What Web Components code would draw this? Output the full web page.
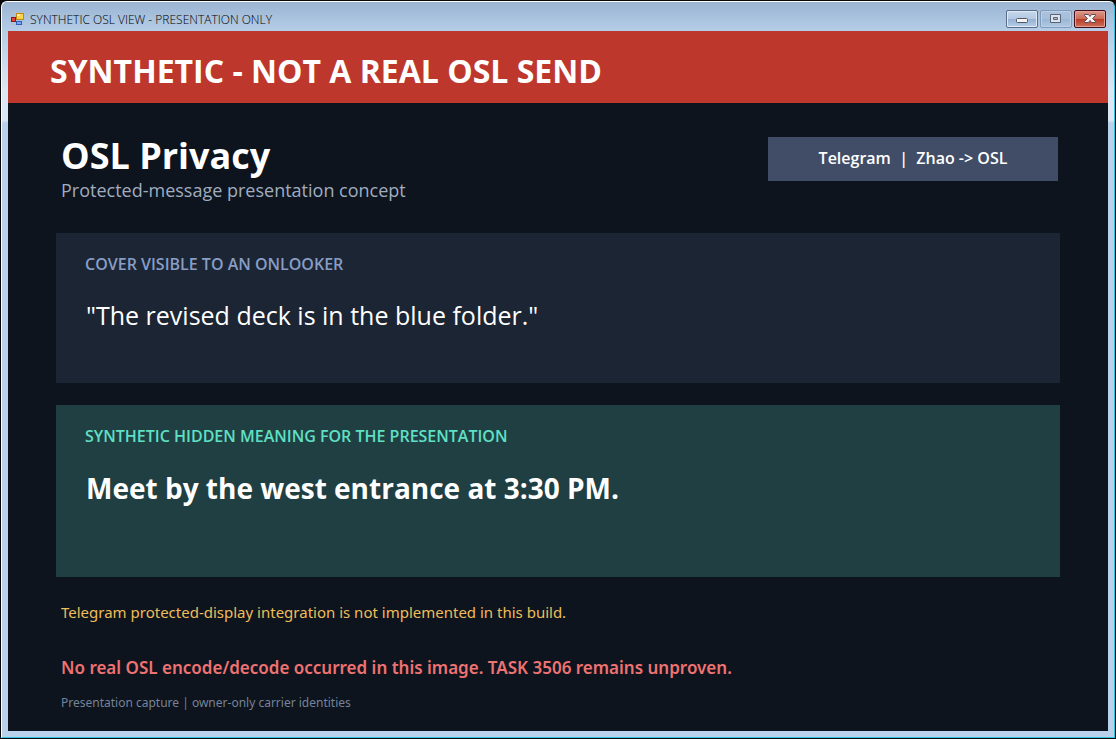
<!DOCTYPE html>
<html lang="en">
<head>
<meta charset="utf-8">
<title>SYNTHETIC OSL VIEW - PRESENTATION ONLY</title>
<style>
  html, body { margin: 0; background: #08080a; }
  body { font-family: "Open Sans", "Noto Sans", sans-serif; color: #fff; }
</style>
</head>
<body>
<app-window caption="SYNTHETIC OSL VIEW - PRESENTATION ONLY">
  <alert-banner>SYNTHETIC - NOT A REAL OSL SEND</alert-banner>
  <page-header>
    <span slot="title">OSL Privacy</span>
    <span slot="subtitle">Protected-message presentation concept</span>
    <route-badge slot="badge">Telegram&nbsp; |&nbsp; Zhao -&gt; OSL</route-badge>
  </page-header>
  <message-card>
    <span slot="label">COVER VISIBLE TO AN ONLOOKER</span>
    "The revised deck is in the blue folder."
  </message-card>
  <message-card tone="hidden">
    <span slot="label">SYNTHETIC HIDDEN MEANING FOR THE PRESENTATION</span>
    Meet by the west entrance at 3:30 PM.
  </message-card>
  <status-notes>
    <span slot="notice">Telegram protected-display integration is not implemented in this build.</span>
    <span slot="warning">No real OSL encode/decode occurred in this image. TASK 3506 remains unproven.</span>
    <span slot="footer">Presentation capture | owner-only carrier identities</span>
  </status-notes>
</app-window>

<template id="app-window">
  <style>
    :host {
      display: flex; flex-direction: column; box-sizing: border-box; min-height: 100vh;
      border: 1px solid #08080a; background: #08080a;
    }
    .frame {
      flex: 1; display: flex; flex-direction: column; box-sizing: border-box;
      border: 1px solid #fff; border-right-color: #35c4e0; border-bottom-color: #35c4e0;
      border-radius: 6px 6px 0 0; padding: 0 6px 6px;
      background: linear-gradient(#9ab4d2 0, #b4cce6 28px, #dde7f3 88px, #dde7f3 118px, #b9d1ea 121px);
    }
    main {
      flex: 1; background: #0d141d; padding-bottom: 14px;
    }
  </style>
  <div class="frame">
    <title-bar></title-bar>
    <main><slot></slot></main>
  </div>
</template>

<template id="title-bar">
  <style>
    :host { display: flex; align-items: center; height: 29px; padding-left: 3px; box-sizing: border-box; }
    .icon { width: 14px; height: 14px; margin: 5px 5px 0 0; }
    .caption { flex: 1; padding-top: 6px; font-size: 12px; font-weight: 300; line-height: 16px; color: #000; white-space: nowrap; }
    .controls { display: flex; gap: 2px; padding: 4px 2px 0 0; }
  </style>
  <svg class="icon" viewBox="0 0 14 14" shape-rendering="crispEdges" aria-hidden="true">
    <rect x=".5" y=".5" width="12" height="12" fill="none" stroke="#b9bec6"/>
    <rect x="5" y="1" width="8" height="7" fill="#c08a12"/>
    <rect x="6" y="2" width="6" height="5" fill="#fbd34b"/>
    <rect x="6" y="2" width="3" height="2" fill="#fff0a8"/>
    <rect x="0" y="5" width="5" height="5" fill="#8e1511"/>
    <rect x="1" y="6" width="3" height="3" fill="#e0473a"/>
    <rect x="5" y="9" width="6" height="4" fill="#2a5bbd"/>
    <rect x="6" y="10" width="4" height="2" fill="#79a8f2"/>
  </svg>
  <span class="caption"></span>
  <div class="controls">
    <caption-button kind="minimize"></caption-button>
    <caption-button kind="maximize"></caption-button>
    <caption-button kind="close"></caption-button>
  </div>
</template>

<template id="caption-button">
  <style>
    :host { display: block; }
    button {
      display: block; box-sizing: border-box; width: 32px; height: 18px; padding: 0;
      border: 1px solid #5b6c86; border-radius: 2px;
      background: linear-gradient(#c6d7ea, #b3c9e2 50%, #94b0d0 50%, #b6cfe8);
      box-shadow: inset 0 0 0 1px #dfeaf6;
    }
    :host([kind="maximize"]) button {
      border-color: #7f9abb; box-shadow: inset 0 0 0 1px #bcd0e6;
      background: linear-gradient(#abc3de, #a5bedb 50%, #9bb6d5 50%, #afc9e4);
    }
    :host([kind="close"]) button {
      border-color: #43101a; box-shadow: inset 0 0 0 1px #e5a294;
      background: linear-gradient(#dc9a8c, #cb6855 50%, #b73a25 50%, #d0705a);
    }
    svg { display: block; width: 30px; height: 16px; }
  </style>
  <button type="button"><svg viewBox="0 0 30 16" aria-hidden="true"></svg></button>
</template>

<template id="alert-banner">
  <style>
    :host {
      display: block; padding: 8px 42px 0; background: #bd372c;
      font-size: 32px; font-weight: 700; line-height: 64px;
    }
  </style>
  <slot></slot>
</template>

<template id="page-header">
  <style>
    :host { display: flex; justify-content: space-between; align-items: flex-start; padding: 31px 50px 31px 53px; }
    h1 { margin: 0; font-size: 36px; font-weight: 700; line-height: 44px; }
    p { margin: 0; font-size: 18px; line-height: 24px; color: #a0acc0; }
    .badge { padding-top: 3px; }
  </style>
  <div>
    <h1><slot name="title"></slot></h1>
    <p><slot name="subtitle"></slot></p>
  </div>
  <div class="badge"><slot name="badge"></slot></div>
</template>

<template id="route-badge">
  <style>
    :host {
      display: block; width: 290px; box-sizing: border-box; padding: 9px 0 11px; background: #414d66;
      font-size: 16px; font-weight: 600; line-height: 24px; text-align: center;
    }
  </style>
  <slot></slot>
</template>

<template id="message-card">
  <style>
    :host { display: block; box-sizing: border-box; min-height: 150px; margin: 0 48px 22px; padding: 19px 29px; background: #1c2533; }
    h2 { margin: 0 0 20px; font-size: 16px; font-weight: 600; line-height: 24px; color: #879dc6; }
    p { margin: 0; padding-left: 1px; font-size: 25px; line-height: 38px; }
    :host([tone="hidden"]) { min-height: 172px; margin-bottom: 0; background: #203f43; }
    :host([tone="hidden"]) h2 { color: #5fe0c3; }
    :host([tone="hidden"]) p { font-size: 28px; font-weight: 700; line-height: 40px; }
  </style>
  <h2><slot name="label"></slot></h2>
  <p><slot></slot></p>
</template>

<template id="status-notes">
  <style>
    :host { display: block; padding: 23px 53px 0; font-family: "Noto Sans", sans-serif; }
    ::slotted(*) { font-family: "Noto Sans", sans-serif; }
    p { margin: 0; line-height: 24px; }
    .notice { font-size: 15px; color: #efbd5a; }
    .warning { margin-top: 32px; font-size: 17px; font-weight: 600; color: #ef7272; }
    .footer { margin-top: 11px; font-size: 12px; color: #76839a; }
  </style>
  <p class="notice"><slot name="notice"></slot></p>
  <p class="warning"><slot name="warning"></slot></p>
  <p class="footer"><slot name="footer"></slot></p>
</template>

<script>
  class TemplateElement extends HTMLElement {
    constructor() {
      super();
      const template = document.getElementById(this.localName);
      this.attachShadow({ mode: "open" }).append(template.content.cloneNode(true));
    }
  }

  const GLYPHS = {
    minimize: '<rect x="9.5" y="7.5" width="11" height="4" rx="1" fill="#f4f4f4" stroke="#515766"/>',
    maximize: '<path d="M9.5 3.5h10v8h-10z M12.5 6.500v2h4v-2z" fill="#dfe3ea" fill-rule="evenodd" stroke="#596478"/>',
    close: '<path d="M9.500 3.500h4l1.500 2 1.500-2h4v1L17.500 7.500l3 3v1h-4L15 9.500l-1.500 2h-4v-1l3-3-3-3z" fill="#f6f4f4" stroke="#5a4a55"/>'
  };

  customElements.define("caption-button", class extends TemplateElement {
    connectedCallback() {
      const kind = this.getAttribute("kind");
      this.shadowRoot.querySelector("button").setAttribute("aria-label", kind);
      this.shadowRoot.querySelector("svg").innerHTML = GLYPHS[kind];
    }
  });

  customElements.define("title-bar", class extends TemplateElement {
    static observedAttributes = ["caption"];
    attributeChangedCallback(name, previous, value) {
      this.shadowRoot.querySelector(".caption").textContent = value;
    }
  });

  customElements.define("app-window", class extends TemplateElement {
    connectedCallback() {
      this.shadowRoot.querySelector("title-bar").setAttribute("caption", this.getAttribute("caption"));
    }
  });

  for (const name of ["alert-banner", "page-header", "route-badge", "message-card", "status-notes"]) {
    customElements.define(name, class extends TemplateElement {});
  }
</script>
</body>
</html>
